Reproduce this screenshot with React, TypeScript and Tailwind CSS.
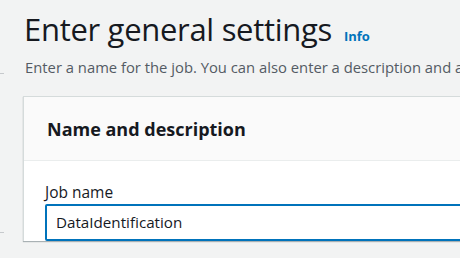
export default function App() {
  return (
    <div
      className="flex h-[258px] w-[460px] overflow-hidden bg-[#f2f3f3] text-[#16191f]"
      style={{ fontFamily: '"Open Sans", "Noto Sans", Arial, sans-serif' }}
    >
      {/* collapsed side navigation rail */}
      <div className="flex w-[4px] shrink-0 flex-col">
        <div className="mt-[73px] h-px w-[4px] bg-[#c6c9cc]" />
        <div className="mt-[158px] h-px w-[4px] bg-[#c6c9cc]" />
      </div>

      <main className="min-w-0 flex-1 pl-[19px]">
        <div className="flex items-baseline gap-[12px] pl-[1px] pt-[7px]">
          <h1 className="whitespace-nowrap text-[31px] font-normal leading-[44px] tracking-[-0.3px]">
            Enter general settings
          </h1>
          <a className="text-[13px] font-bold text-[#0073bb]">Info</a>
        </div>
        <p className="mt-[6px] whitespace-nowrap pl-[2px] text-[14.8px] leading-[20px] text-[#545b64]">
          Enter a name for the job. You can also enter a description and add tags.
        </p>

        <section className="mt-[19px] w-[470px] border-l border-t border-[#d5dbdb] bg-white shadow-[0_1px_1px_0_rgba(0,28,36,0.3)]">
          <div className="flex h-[64px] items-center border-b border-[#eaeded] bg-[#fafafa] pl-[23px]">
            <h2 className="whitespace-nowrap text-[18px] font-bold leading-[24px]">Name and description</h2>
          </div>
          <div className="pl-[21px] pt-[20px]">
            <label className="block text-[15.5px] leading-[22px]">Job name</label>
            <div className="mt-[1px] flex h-[37px] items-center rounded-[2px] border-2 border-[#0073bb] bg-white pl-[9px]">
              <span className="text-[15.2px]">DataIdentification</span>
            </div>
          </div>
        </section>
      </main>
    </div>
  );
}
